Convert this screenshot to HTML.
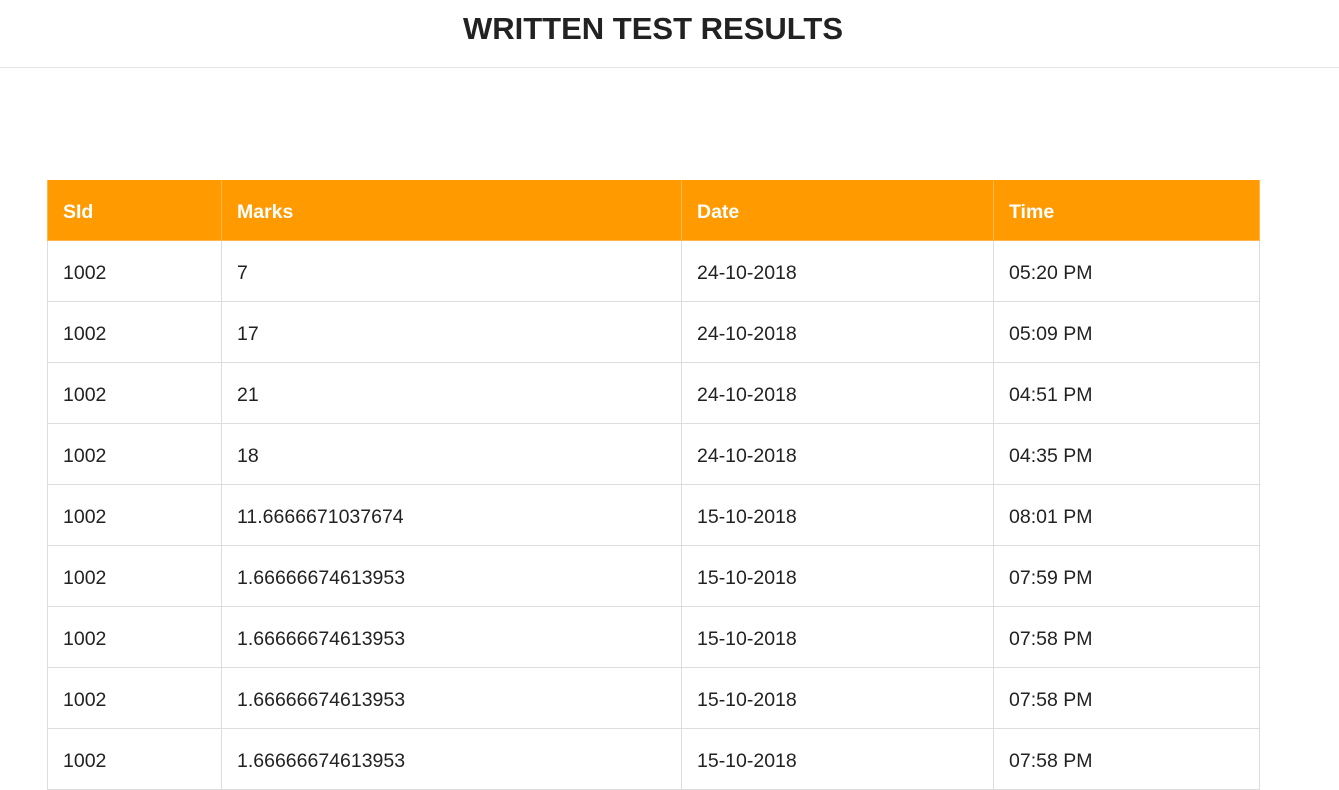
<!DOCTYPE html>
<html><head><style>
body{margin:0;background:#fff;font-family:"Liberation Sans",sans-serif;color:#212529;width:1339px;height:732px;overflow:hidden;position:relative}
h1{margin:0;position:absolute;top:0;left:0;height:68px;line-height:58px;text-align:center;font-size:31px;font-weight:bold;color:#222;border-bottom:1px solid #e5e5e5;width:1339px;padding-right:33px;box-sizing:border-box;letter-spacing:0px}
table{position:absolute;left:47px;top:180px;border-collapse:collapse;font-size:19.5px}
th,td{border:1px solid #ddd;padding:5px 15px 0;height:61px;text-align:left;box-sizing:border-box}
th{background:#FF9A00;color:#fff;font-weight:bold;border-color:#ffb74d;border-top:none;height:60px}
td{color:#222}
</style></head><body>
<h1>WRITTEN TEST RESULTS</h1>
<table>
<colgroup><col style="width:174px"><col style="width:460px"><col style="width:312px"><col style="width:266px"></colgroup>
<tr><th>SId</th><th>Marks</th><th>Date</th><th>Time</th></tr>
<tr><td>1002</td><td>7</td><td>24-10-2018</td><td>05:20 PM</td></tr>
<tr><td>1002</td><td>17</td><td>24-10-2018</td><td>05:09 PM</td></tr>
<tr><td>1002</td><td>21</td><td>24-10-2018</td><td>04:51 PM</td></tr>
<tr><td>1002</td><td>18</td><td>24-10-2018</td><td>04:35 PM</td></tr>
<tr><td>1002</td><td>11.6666671037674</td><td>15-10-2018</td><td>08:01 PM</td></tr>
<tr><td>1002</td><td>1.66666674613953</td><td>15-10-2018</td><td>07:59 PM</td></tr>
<tr><td>1002</td><td>1.66666674613953</td><td>15-10-2018</td><td>07:58 PM</td></tr>
<tr><td>1002</td><td>1.66666674613953</td><td>15-10-2018</td><td>07:58 PM</td></tr>
<tr><td>1002</td><td>1.66666674613953</td><td>15-10-2018</td><td>07:58 PM</td></tr>
</table>
</body></html>
